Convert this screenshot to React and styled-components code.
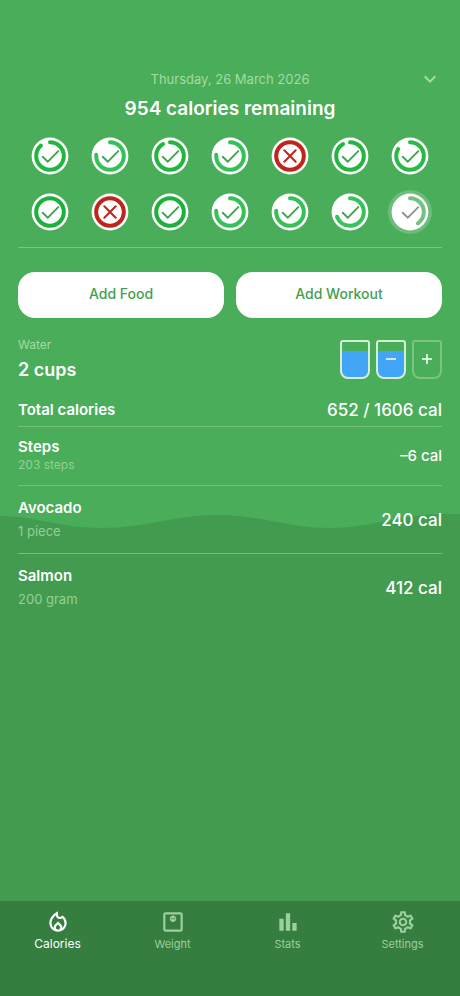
import React, { useState } from 'react';
import styled, { createGlobalStyle } from 'styled-components';
import { MdOutlineLocalFireDepartment, MdOutlineMonitorWeight, MdOutlineSettings, MdKeyboardArrowDown } from 'react-icons/md';

const GlobalStyle = createGlobalStyle`
    * {
        box-sizing: border-box;
    }

    body {
        margin: 0;
        background-color: #439b50;
        font-family: Inter, Roboto, sans-serif;
        color: #ffffff;
    }

    button {
        font-family: inherit;
        cursor: pointer;
    }
`

const Page = styled.div`
    position: relative;
    min-height: 100vh;
    display: flex;
    flex-direction: column;
    overflow: hidden;
`

const Backdrop = styled.div`
    position: absolute;
    inset: 0;
    z-index: -1;
    display: flex;
    flex-direction: column;
`

const Sky = styled.div`
    height: 51.6vh;
    background-color: #49ad59;
`

const WaveShape = styled.svg`
    display: block;
    width: 100%;
    height: 14px;
    background-color: #49ad59;
`

const Content = styled.main`
    flex: 1;
    padding: 67px 18px 24px;
`

const DateRow = styled.header`
    display: grid;
    grid-template-columns: 24px 1fr 24px;
    align-items: center;
    height: 24px;
`

const DateText = styled.span`
    grid-column: 2;
    text-align: center;
    font-size: 13px;
    color: #a5dba4;
`

const ExpandButton = styled.button`
    display: flex;
    padding: 0;
    border: 0;
    background: none;
    color: #a5dba4;
    font-size: 24px;
`

const Remaining = styled.h1`
    margin: 6px 0 0;
    text-align: center;
    font-size: 19px;
    line-height: 24px;
    font-weight: 600;
`

const DayGrid = styled.div`
    display: grid;
    grid-template-columns: repeat(7, 1fr);
    row-gap: 12px;
    justify-items: center;
    padding: 13px 2px;
    border-bottom: 1px solid #7bc580;
`

const DayButton = styled.button`
    display: block;
    width: 44px;
    height: 44px;
    padding: 0;
    border: 0;
    border-radius: 50%;
    background-color: ${props => props.$selected ? 'rgba(255, 255, 255, 0.2)' : 'transparent'};
`

const Actions = styled.div`
    display: flex;
    gap: 12px;
    margin-top: 24px;
`

const ActionButton = styled.button`
    flex: 1;
    height: 46px;
    border: 0;
    border-radius: 17px;
    background-color: #ffffff;
    color: #43a04f;
    font-size: 14px;
    line-height: 18px;
    font-weight: 500;
    padding: 0 0 2px;
`

const Water = styled.section`
    display: flex;
    justify-content: space-between;
    align-items: center;
    margin-top: 18px;
`

const WaterLabel = styled.div`
    font-size: 12px;
    line-height: 18px;
    color: #a5dba4;
`

const WaterAmount = styled.div`
    margin-top: 4px;
    font-size: 18px;
    line-height: 24px;
    font-weight: 600;
`

const Cups = styled.div`
    display: flex;
    gap: 6px;
`

const Cup = styled.button`
    display: flex;
    align-items: center;
    justify-content: center;
    width: 30px;
    height: 39px;
    padding: 0;
    border: 2px solid ${props => props.$filled ? '#d3f0d6' : '#7bc580'};
    border-radius: 3px 3px 8px 8px;
    background: ${props => props.$filled ? 'linear-gradient(transparent 9px, #42a5f5 9px)' : 'none'};
`

const Row = styled.div`
    display: flex;
    justify-content: space-between;
    align-items: center;
    padding: ${props => props.$pad}px 0;
    border-bottom: ${props => props.$last ? 'none' : '1px solid #74c07a'};
`

const RowTitle = styled.div`
    font-size: 15px;
    line-height: 18px;
    font-weight: 600;
`

const RowDetail = styled.div`
    margin-top: ${props => props.$compact ? 0 : 5}px;
    font-size: ${props => props.$compact ? 12 : 13}px;
    line-height: 18px;
    color: #94d096;
`

const RowValue = styled.div`
    font-size: ${props => props.$compact ? 15 : 17}px;
    line-height: 20px;
    font-weight: 500;
`

const Total = styled(Row)`
    margin-top: 12px;
`

const Nav = styled.nav`
    display: flex;
    height: 95px;
    background-color: #367d40;
`

const NavItem = styled.a`
    flex: 1;
    display: flex;
    flex-direction: column;
    align-items: center;
    padding-top: 8px;
    text-decoration: none;
    color: ${props => props.$active ? '#ffffff' : '#9bcf9d'};
    font-size: ${props => props.$active ? 12 : 11}px;
    line-height: 18px;

    svg {
        width: 26px;
        height: 26px;
    }
`

const days = [
    { amount: 0.88, color: '#22b540' },
    { amount: 0.76, color: '#35c157' },
    { amount: 0.91, color: '#22b540' },
    { amount: 0.76, color: '#35c157' },
    { over: true },
    { amount: 0.91, color: '#22b540' },
    { amount: 0.83, color: '#28b948' },
    { amount: 1, color: '#1cb13c' },
    { over: true },
    { amount: 1, color: '#1cb13c' },
    { amount: 0.76, color: '#35c157' },
    { amount: 0.76, color: '#35c157' },
    { amount: 0.69, color: '#37c35b' },
    { amount: 0.4, color: '#73c280', today: true },
];

const entries = [
    { title: 'Steps', detail: '203 steps', value: '–6 cal', compact: true },
    { title: 'Avocado', detail: '1 piece', value: '240 cal' },
    { title: 'Salmon', detail: '200 gram', value: '412 cal' },
];

const ringLength = 2 * Math.PI * 13.8;

function DayRing({ day }){
    const amount = day.over ? 1 : day.amount;

    return (
        <svg width="44" height="44" viewBox="-22 -22 44 44" fill="none" strokeLinecap="round">
            <circle r="18.4" fill="#ffffff" />
            <circle
                r="13.8"
                stroke={day.over ? '#c0251b' : day.color}
                strokeWidth="4"
                strokeLinecap={amount === 1 ? 'butt' : 'round'}
                strokeDasharray={amount === 1 ? undefined : `${ringLength * amount} ${ringLength}`}
                transform="rotate(-90)"
            />
            {day.over
                ? <path d="M-5.7-5.7 5.7 5.7M5.7-5.7-5.7 5.7" stroke="#c0251b" strokeWidth="2" />
                : <path d="M-7.3.8-2.2 5.7 8.3-4.8" stroke={day.today ? '#8d9490' : '#3aa649'} strokeWidth="1.9" />}
        </svg>
    );
}

function Wave(){
    return (
        <WaveShape viewBox="0 0 460 14" preserveAspectRatio="none">
            <path d="M0 2C35 2 60 14 102 14C145 14 175 1 218 1C260 1 290 14 330 14C372 14 400 0 446 0L460 0V14H0Z" fill="#439b50" />
        </WaveShape>
    );
}

function StatsIcon(){
    return (
        <svg viewBox="0 0 24 24" fill="currentColor">
            <path d="M4 9h4v11H4zM10 4h4v16h-4zM16 13h4v7h-4z" />
        </svg>
    );
}

const tabs = [
    { name: 'Calories', icon: <MdOutlineLocalFireDepartment /> },
    { name: 'Weight', icon: <MdOutlineMonitorWeight /> },
    { name: 'Stats', icon: <StatsIcon /> },
    { name: 'Settings', icon: <MdOutlineSettings /> },
];

function App(){
    const [cups, setCups] = useState(2);
    const [selected, setSelected] = useState(13);
    const [tab, setTab] = useState('Calories');

    const onTab = (event, name) => {
        event.preventDefault();
        setTab(name);
    };

    return (
        <Page>
            <GlobalStyle />
            <Backdrop>
                <Sky />
                <Wave />
            </Backdrop>
            <Content>
                <DateRow>
                    <DateText>Thursday, 26 March 2026</DateText>
                    <ExpandButton aria-label="Choose date"><MdKeyboardArrowDown /></ExpandButton>
                </DateRow>
                <Remaining>954 calories remaining</Remaining>

                <DayGrid>
                    {days.map((day, i) => (
                        <DayButton key={i} $selected={i === selected} aria-label={`Day ${i + 1}`} onClick={() => setSelected(i)}>
                            <DayRing day={day} />
                        </DayButton>
                    ))}
                </DayGrid>

                <Actions>
                    <ActionButton>Add Food</ActionButton>
                    <ActionButton>Add Workout</ActionButton>
                </Actions>

                <Water>
                    <div>
                        <WaterLabel>Water</WaterLabel>
                        <WaterAmount>{cups} cups</WaterAmount>
                    </div>
                    <Cups>
                        {Array.from({ length: cups }, (_, i) => (
                            <Cup key={i} $filled aria-label={`Cup ${i + 1}`} onClick={() => setCups(i)}>
                                {i === cups - 1 && (
                                    <svg width="12" height="12" stroke="#ffffff" strokeWidth="1.5"><path d="M1 6h10" /></svg>
                                )}
                            </Cup>
                        ))}
                        <Cup aria-label="Add cup" onClick={() => setCups(cups + 1)}>
                            <svg width="12" height="12" stroke="#ffffff" strokeWidth="1.5"><path d="M1 6h10M6 1v10" /></svg>
                        </Cup>
                    </Cups>
                </Water>

                <Total $pad={6}>
                    <RowTitle>Total calories</RowTitle>
                    <RowValue>652 / 1606 cal</RowValue>
                </Total>
                {entries.map((entry, i) => (
                    <Row key={entry.title} $pad={entry.compact ? 11 : 13} $last={i === entries.length - 1}>
                        <div>
                            <RowTitle>{entry.title}</RowTitle>
                            <RowDetail $compact={entry.compact}>{entry.detail}</RowDetail>
                        </div>
                        <RowValue $compact={entry.compact}>{entry.value}</RowValue>
                    </Row>
                ))}
            </Content>

            <Nav>
                {tabs.map(({ name, icon }) => (
                    <NavItem key={name} href={`#${name.toLowerCase()}`} $active={name === tab} onClick={event => onTab(event, name)}>
                        {icon}
                        {name}
                    </NavItem>
                ))}
            </Nav>
        </Page>
    );
}

export default App;
